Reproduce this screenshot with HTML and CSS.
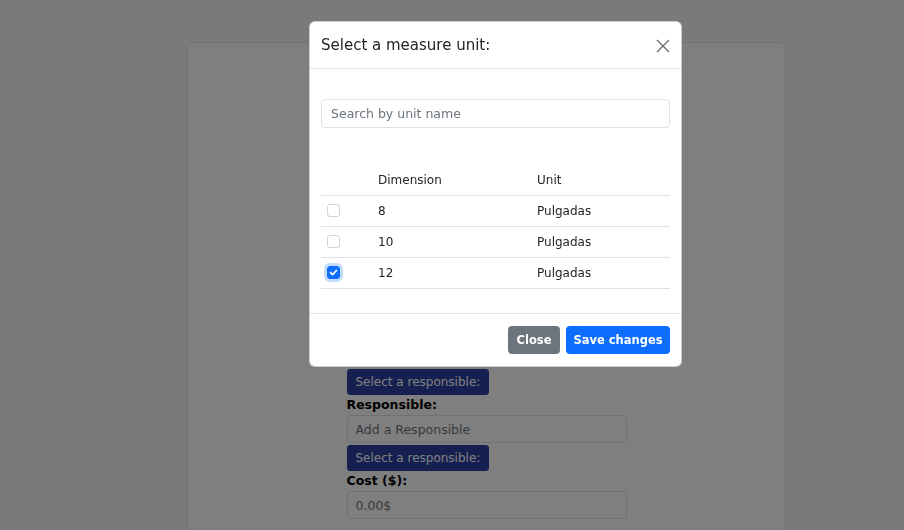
FILE: index.html
```html
<!DOCTYPE html>
<html>
<head>
<meta charset="utf-8">
<link rel="stylesheet" href="styles.css">
</head>
<body>
<div class="page">
  <div class="card">
    <form class="form">
      <label class="lbl">Measure unit:</label>
      <input class="field" placeholder="Add a measure unit">
      <button type="button" class="btn-navy">Select a responsible:</button>
      <label class="lbl">Responsible:</label>
      <input class="field" placeholder="Add a Responsible">
      <button type="button" class="btn-navy">Select a responsible:</button>
      <label class="lbl">Cost ($):</label>
      <input class="field" placeholder="0.00$">
    </form>
  </div>
</div>
<div class="backdrop"></div>
<div class="modal-wrap">
  <div class="modal">
    <div class="modal-header">
      <h5 class="modal-title">Select a measure unit:</h5>
      <svg class="close-x" width="14" height="14" viewBox="0 0 14 14"><path d="M1 1L13 13M13 1L1 13" stroke="#6c6c6c" stroke-width="1.4" fill="none"/></svg>
    </div>
    <div class="modal-body">
      <input class="search" placeholder="Search by unit name">
      <table class="units">
        <thead>
          <tr><th class="c0"></th><th class="c1">Dimension</th><th>Unit</th></tr>
        </thead>
        <tbody>
          <tr><td class="c0"><span class="cb"></span></td><td>8</td><td>Pulgadas</td></tr>
          <tr><td class="c0"><span class="cb"></span></td><td>10</td><td>Pulgadas</td></tr>
          <tr><td class="c0"><span class="cb checked"><svg width="9" height="9" viewBox="0 0 9 9"><path d="M1.5 4.6L3.6 6.6L7.5 2.4" stroke="#fff" stroke-width="1.6" fill="none" stroke-linecap="round" stroke-linejoin="round"/></svg></span></td><td>12</td><td>Pulgadas</td></tr>
        </tbody>
      </table>
    </div>
    <div class="modal-footer">
      <button type="button" class="btn btn-gray">Close</button>
      <button type="button" class="btn btn-blue">Save changes</button>
    </div>
  </div>
</div>
</body>
</html>
```
FILE: styles.css
```css
* { box-sizing: border-box; }
html, body { margin: 0; padding: 0; }
body {
  background: #f4f4f4;
  font-family: "DejaVu Sans", Verdana, sans-serif;
  color: #212529;
  width: 904px;
  height: 530px;
  overflow: hidden;
}
.page {
  padding-top: 42px;
  display: flex;
  justify-content: flex-start;
  padding-left: 187px;
}
.card {
  width: 599px;
  height: 520px;
  background: #fff;
  border: 1px solid #e6e6e6;
  border-radius: 6px;
  display: flex;
  justify-content: center;
  padding-top: 276px;
}
.form {
  width: 280px;
  display: flex;
  flex-direction: column;
  align-items: flex-start;
}
.lbl {
  font-weight: bold;
  font-size: 12.5px;
  line-height: 20px;
  color: #000;
}
.field {
  width: 280px;
  height: 28px;
  border: 1px solid #dee2e6;
  border-radius: 4px;
  padding: 0 8px;
  font-family: inherit;
  font-size: 12.5px;
  color: #212529;
  background: #fff;
}
.field::placeholder { color: #6c757d; }
.btn-navy {
  margin-top: 2px;
  height: 26px;
  padding: 0 8px;
  border: 1px solid #2a40a0;
  background: #2a40a0;
  color: #fff;
  border-radius: 3px;
  font-family: inherit;
  font-size: 12px;
}
.backdrop {
  position: fixed;
  inset: 0;
  background: rgba(0,0,0,0.5);
}
.modal-wrap {
  position: fixed;
  top: 21px;
  left: 309px;
}
.modal {
  width: 373px;
  background: #fff;
  border-radius: 6px;
  border: 1px solid rgba(0,0,0,0.2);
  overflow: hidden;
}
.modal-header {
  height: 47px;
  border-bottom: 1px solid #dee2e6;
  display: flex;
  align-items: center;
  justify-content: space-between;
  padding: 0 11px 0 11px;
}
.modal-title {
  margin: 0;
  font-size: 15px;
  font-weight: normal;
  color: #212529;
}
.close-x { margin-top: 1px; }
.modal-body {
  padding: 30px 11px 24px;
}
.search {
  display: block;
  width: 100%;
  height: 29px;
  border: 1px solid #dee2e6;
  border-radius: 4px;
  padding: 0 9px;
  font-family: inherit;
  font-size: 12.5px;
  color: #212529;
}
.search::placeholder { color: #6c757d; }
.units {
  width: 100%;
  margin-top: 37px;
  border-collapse: collapse;
  font-size: 12px;
  color: #212529;
}
.units th {
  font-weight: normal;
  text-align: left;
  height: 30px;
  padding: 0 8px;
  border-bottom: 1px solid #dee2e6;
}
.units td {
  height: 31px;
  padding: 0 8px;
  border-bottom: 1px solid #dee2e6;
}
.units .c0 { width: 49px; padding-left: 6px; }
.units .c1 { width: 159px; }
.cb {
  display: block;
  width: 13px;
  height: 13px;
  border: 1px solid #d0d4d8;
  border-radius: 3px;
  background: #fff;
}
.cb.checked {
  background: #0d6efd;
  border-color: #0d6efd;
  box-shadow: 0 0 0 3px rgba(13,110,253,0.25);
  display: flex;
  align-items: center;
  justify-content: center;
}
.modal-footer {
  border-top: 1px solid #dee2e6;
  padding: 12px 11px 12px;
  display: flex;
  justify-content: flex-end;
  gap: 6px;
}
.btn {
  height: 28px;
  border: none;
  border-radius: 4px;
  color: #fff;
  font-family: inherit;
  font-weight: bold;
  font-size: 11.5px;
  padding: 0 10px;
}
.btn-gray { background: #6c757d; width: 52px; padding: 0; }
.btn-blue { background: #0d6efd; width: 104px; padding: 0; }
```
